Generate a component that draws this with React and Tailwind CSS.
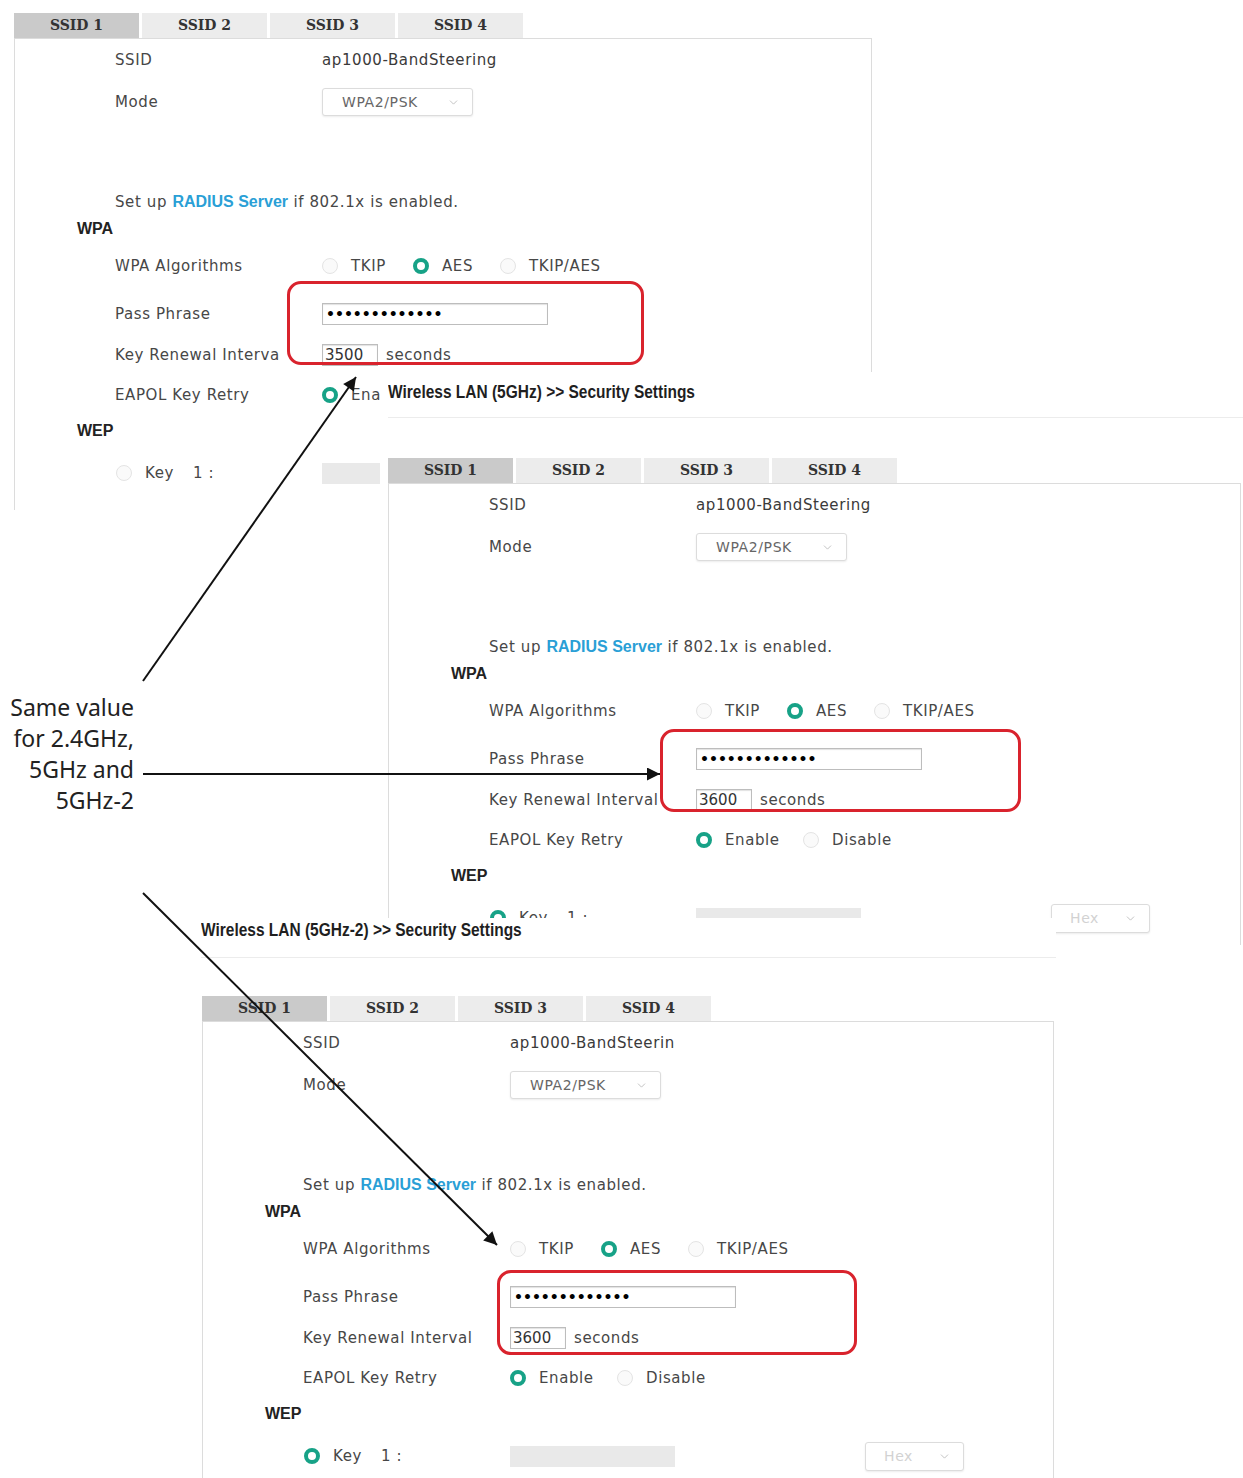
import { ChevronDown } from "lucide-react";

const tabs = ["SSID 1", "SSID 2", "SSID 3", "SSID 4"];

function Radio({ on }) {
	if (on) {
		return <span className="block w-[16px] h-[16px] shrink-0 rounded-full border-[4px] border-[#17a287] bg-white" />;
	}
	return <span className="block w-[16px] h-[16px] shrink-0 rounded-full border border-[#e4e4e4] bg-[#fafafa]" />;
}

function Select({ text, className }) {
	return (
		<div className={`flex items-center justify-between rounded-[3px] border border-[#dcdcdc] bg-white shadow-[0_1px_2px_rgba(0,0,0,0.08)] ${className}`}>
			<span>{text}</span>
			<ChevronDown size={13} strokeWidth={1.5} className="text-[#b5b5b5]" />
		</div>
	);
}

function Row({ h, label, children }) {
	return (
		<div className={`flex items-center ${h}`}>
			<div className="w-[307px] shrink-0 pl-[100px] whitespace-nowrap">{label}</div>
			<div className="flex items-center whitespace-nowrap">{children}</div>
		</div>
	);
}

function Option({ on, label, w }) {
	return (
		<div className={`flex items-center ${w}`}>
			<Radio on={on} />
			<span className="ml-[13px]">{label}</span>
		</div>
	);
}

// One "Security Settings" page: tab strip plus the WPA/WEP form
function SecurityForm({ boxW, ssid, renew, renewLabel, mark, keyOn = true, hex = true }) {
	return (
		<div className="font-['DejaVu_Sans',sans-serif] text-[15px] tracking-[0.6px] text-[#474747]">
			<div className="flex gap-[3px] h-[25px]">
				{tabs.map((t, i) => (
					<div
						key={t}
						className={`w-[125px] flex items-center justify-center font-['DejaVu_Serif',serif] font-bold text-[14px] text-[#333] tracking-normal ${
							i === 0 ? "bg-[#cacaca]" : "bg-[#ececec]"
						}`}
					>
						{t}
					</div>
				))}
			</div>

			<div className={`relative border-t border-l border-r border-[#dcdcdc] h-[560px] ${boxW}`}>
				<Row h="h-[42px]" label="SSID">
					<span className="text-[#3a3a3a]">{ssid}</span>
				</Row>
				<Row h="h-[42px]" label="Mode">
					<Select text="WPA2/PSK" className="w-[151px] h-[28px] pl-[19px] pr-[12px] text-[14px] text-[#666]" />
				</Row>

				<div className="h-[65px]" />

				<div className="h-[28px] flex items-center pl-[100px] whitespace-nowrap">
					Set up&nbsp;
					<span className="font-['Liberation_Sans',sans-serif] font-bold text-[16px] text-[#2a9fd6] tracking-normal">RADIUS Server</span>
					&nbsp;if 802.1x is enabled.
				</div>

				<div className="h-[26px] flex items-center pl-[62px] font-['Liberation_Sans',sans-serif] font-bold text-[16px] text-[#222] tracking-normal">WPA</div>

				<Row h="h-[48px]" label="WPA Algorithms">
					<Option label="TKIP" w="w-[91px]" />
					<Option on label="AES" w="w-[87px]" />
					<Option label="TKIP/AES" />
				</Row>

				<Row h="h-[48px]" label="Pass Phrase">
					<div className="w-[226px] h-[22px] border border-[#bdbdbd] bg-white shadow-[inset_0_1px_1px_rgba(0,0,0,0.12)] flex items-center pl-[3px] text-[14px] font-bold text-black tracking-normal">
						•••••••••••••
					</div>
				</Row>

				<Row h="h-[34px]" label={renewLabel}>
					<div className="w-[56px] h-[22px] border border-[#bdbdbd] bg-white shadow-[inset_0_1px_1px_rgba(0,0,0,0.12)] flex items-center pl-[2px] text-[#333] tracking-normal">
						{renew}
					</div>
					<span className="ml-[8px]">seconds</span>
				</Row>

				<Row h="h-[46px]" label="EAPOL Key Retry">
					<Option on label="Enable" w="w-[107px]" />
					<Option label="Disable" />
				</Row>

				<div className="h-[26px] flex items-center pl-[62px] font-['Liberation_Sans',sans-serif] font-bold text-[16px] text-[#222] tracking-normal">WEP</div>

				<div className="h-[58px] flex items-center whitespace-nowrap">
					<div className="w-[307px] shrink-0 pl-[101px] flex items-center">
						<Radio on={keyOn} />
						<span className="ml-[13px] w-[48px]">Key</span>
						<span>1 :</span>
					</div>
					<div className="w-[165px] h-[21px] bg-[#e9e9e9]" />
					{hex && <Select text="Hex" className="ml-[190px] w-[99px] h-[29px] pl-[18px] pr-[12px] text-[14px] text-[#d2d2d2]" />}
				</div>

				{/* red call-out round the shared pass phrase and interval */}
				<div className={`absolute border-[3px] border-[#d9232d] rounded-[14px] ${mark}`} />
			</div>
		</div>
	);
}

function PageTitle({ children }) {
	return (
		<span className="inline-block origin-left scale-x-[0.86] whitespace-nowrap font-['Liberation_Sans',sans-serif] font-bold text-[18px] leading-[22px] text-[#1f1f1f]">
			{children}
		</span>
	);
}

export default function App() {
	return (
		<div className="relative w-[1243px] h-[1478px] overflow-hidden bg-white">
			{/* 2.4GHz page */}
			<div className="absolute left-[14px] top-[13px] w-[870px] h-[497px] overflow-hidden bg-white">
				<SecurityForm
					boxW="w-[858px]"
					ssid="ap1000-BandSteering"
					renew="3500"
					renewLabel="Key Renewal Interva"
					mark="top-[242px] left-[272px] w-[357px] h-[84px]"
					keyOn={false}
					hex={false}
				/>
			</div>

			{/* 5GHz page */}
			<div className="absolute left-[380px] top-[372px] w-[863px] h-[573px] overflow-hidden bg-white pl-[8px]">
				<div className="h-[46px] pt-[8px] border-b border-[#ececec]">
					<PageTitle>Wireless LAN (5GHz) &gt;&gt; Security Settings</PageTitle>
				</div>
				<div className="mt-[40px]">
					<SecurityForm
						boxW="w-[853px]"
						ssid="ap1000-BandSteering"
						renew="3600"
						renewLabel="Key Renewal Interval"
						mark="top-[245px] left-[271px] w-[361px] h-[83px]"
					/>
				</div>
			</div>

			{/* 5GHz-2 page */}
			<div className="absolute left-[190px] top-[918px] w-[866px] h-[560px] overflow-hidden bg-white pl-[12px]">
				<div className="h-[40px] border-b border-[#ececec] -ml-[1px]">
					<PageTitle>Wireless LAN (5GHz-2) &gt;&gt; Security Settings</PageTitle>
				</div>
				<div className="mt-[38px]">
					<SecurityForm
						boxW="w-[852px]"
						ssid="ap1000-BandSteerin"
						renew="3600"
						renewLabel="Key Renewal Interval"
						mark="top-[248px] left-[294px] w-[360px] h-[85px]"
					/>
				</div>
			</div>

			{/* note with arrows pointing at each page */}
			<div className="absolute left-0 top-[692px] w-[134px] text-right font-['Noto_Sans',sans-serif] text-[23px] leading-[31px] text-[#222]">
				Same value
				<br />
				for 2.4GHz,
				<br />
				5GHz and
				<br />
				5GHz-2
			</div>

			<svg className="absolute inset-0 pointer-events-none" width="1243" height="1478" viewBox="0 0 1243 1478">
				<defs>
					<marker id="tip" viewBox="0 0 10 10" refX="10" refY="5" markerWidth="17" markerHeight="13" markerUnits="userSpaceOnUse" orient="auto">
						<path d="M0,0 L10,5 L0,10 z" fill="#111" />
					</marker>
				</defs>
				<g stroke="#111" strokeWidth="2" fill="none">
					<line x1="143" y1="681" x2="356" y2="377" markerEnd="url(#tip)" />
					<line x1="143" y1="774" x2="660" y2="774" markerEnd="url(#tip)" />
					<line x1="143" y1="893" x2="497" y2="1245" markerEnd="url(#tip)" />
				</g>
			</svg>
		</div>
	);
}
